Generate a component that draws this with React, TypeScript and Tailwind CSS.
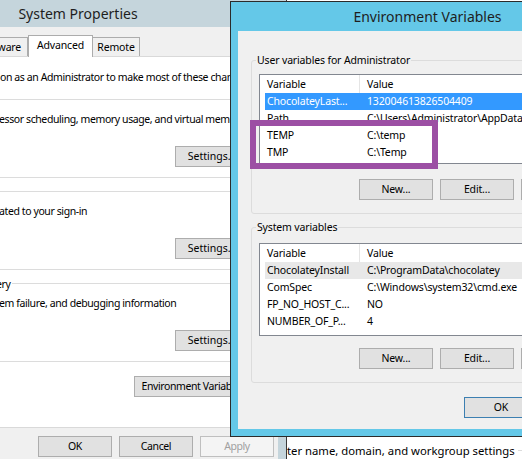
import type { ReactNode } from 'react'

type Row = { name: string; value: string }

const userVars: Row[] = [
  { name: 'ChocolateyLast...', value: '132004613826504409' },
  { name: 'Path', value: 'C:\\Users\\Administrator\\AppData\\Local\\Microsoft\\WindowsApps' },
  { name: 'TEMP', value: 'C:\\temp' },
  { name: 'TMP', value: 'C:\\Temp' },
]

const systemVars: Row[] = [
  { name: 'ChocolateyInstall', value: 'C:\\ProgramData\\chocolatey' },
  { name: 'ComSpec', value: 'C:\\Windows\\system32\\cmd.exe' },
  { name: 'FP_NO_HOST_C...', value: 'NO' },
  { name: 'NUMBER_OF_P...', value: '4' },
]

// text whose start is hidden off the left edge: the first part sits right-aligned in a clipped box
function Cut({ box, hidden, shown }: { box: string; hidden: string; shown: string }) {
  return (
    <div className="flex whitespace-nowrap">
      <span className={`flex shrink-0 justify-end overflow-hidden ${box}`}>
        <span className="shrink-0">{hidden}</span>
      </span>
      <span>{shown}</span>
    </div>
  )
}

function Btn({ children, className = '' }: { children: ReactNode; className?: string }) {
  return (
    <div className={`flex h-[21px] w-[74px] shrink-0 items-center justify-center border whitespace-nowrap ${className}`}>
      {children}
    </div>
  )
}

function ListView({ rows, className, selected }: { rows: Row[]; className: string; selected: 'active' | 'inactive' }) {
  return (
    <div className={`overflow-hidden border border-[#828790] bg-white ${className}`}>
      <div className="flex h-[18px]">
        <div className="flex w-[100px] shrink-0 items-center border-r border-[#e5e5e5] pl-[7px]">Variable</div>
        <div className="flex items-center pl-[7px]">Value</div>
      </div>
      {rows.map((r, i) => (
        <div
          key={r.name}
          className={`ml-[5px] flex h-[17px] items-center whitespace-nowrap ${
            i === 0 ? (selected === 'active' ? 'bg-[#3399ff] text-white' : 'bg-[#e8e8e8]') : ''
          }`}
        >
          <div className="w-[95px] shrink-0 pl-[2px]">{r.name}</div>
          <div className="pl-[7px]">{r.value}</div>
        </div>
      ))}
    </div>
  )
}

function SysGroup({ legend, hidden, shown }: { legend: ReactNode; hidden: string; shown: string }) {
  return (
    <div className="relative flex h-[79px] shrink-0 flex-col rounded-[3px] border border-[#dcdcdc] pt-[12px] pr-[6px] pb-[10px] pl-[9px]">
      <div className="absolute top-[-7px] left-[6px] bg-white pr-[2px] pl-[1px]">{legend}</div>
      <Cut box="w-[92px]" hidden={hidden} shown={shown} />
      <Btn className="mt-auto mr-[3px] w-[72px] self-end border-[#adadad] bg-[#e1e1e1] tracking-normal">Settings...</Btn>
    </div>
  )
}

export default function App() {
  return (
    <div className="relative h-[459px] w-[522px] overflow-hidden bg-white font-['Noto_Sans',sans-serif] text-[10.5px] leading-[15px] text-black">
      {/* window behind, computer name tab */}
      <div className="absolute top-[400px] left-[120px] h-[80px] w-[420px] bg-white pt-[43px] text-[11.3px]">
        <div className="flex items-center">
          <Cut box="w-[167px]" hidden="Compu" shown="ter name, domain, and workgroup settings" />
          <div className="ml-[3px] h-px flex-1 bg-[#dcdcdc]" />
        </div>
      </div>

      {/* System Properties */}
      <div className="absolute top-0 left-[-130px] flex h-[480px] w-[417px] flex-col border-r border-[#3a3a3a] bg-[#c5d5dc] tracking-[-0.4px]">
        <div className="flex h-[27px] shrink-0 items-center justify-center text-[14px] tracking-normal text-[#1e1e1e]">System Properties</div>
        <div className="mx-[8px] flex flex-1 flex-col bg-[#f0f0f0] px-[6px] pt-[8px]">
          <div className="flex h-[21px] items-end pl-[2px] tracking-[-0.15px]">
            <div className="flex h-[19px] w-[81px] items-center justify-center border-t border-l border-[#acacac] whitespace-nowrap">Computer Name</div>
            <div className="flex h-[19px] w-[61px] items-center justify-center border-x border-t border-[#acacac]">Hardware</div>
            <div className="relative z-10 mb-[-1px] flex h-[22px] w-[65px] items-center justify-center border-x border-t border-[#acacac] bg-white pb-[3px]">Advanced</div>
            <div className="flex h-[19px] w-[47px] items-center justify-center border-t border-r border-[#acacac]">Remote</div>
          </div>
          <div className="flex h-[372px] flex-col border border-[#d9d9d9] bg-white px-[12px] pt-[13px]">
            <Cut box="w-[103px]" hidden="You must be logged " shown="on as an Administrator to make most of these changes." />
            <div className="mt-[14px] flex flex-col gap-[13px]">
              <SysGroup legend="Performance" hidden="Visual effects, proc" shown="essor scheduling, memory usage, and virtual memory" />
              <SysGroup legend="User Profiles" hidden="Desktop settings rel" shown="ated to your sign-in" />
              <SysGroup
                legend={<Cut box="w-[91px]" hidden="Startup and Recov" shown="ery" />}
                hidden="System startup, syst"
                shown="em failure, and debugging information"
              />
            </div>
            <Btn className="mt-[14px] w-[125px] self-end border-[#adadad] bg-[#e1e1e1]">Environment Variables...</Btn>
          </div>
          <div className="-mr-[2px] mt-[8px] flex justify-end gap-[7px]">
            <Btn className="border-[#adadad] bg-[#e1e1e1]">OK</Btn>
            <Btn className="border-[#adadad] bg-[#e1e1e1]">Cancel</Btn>
            <Btn className="border-[#bfbfbf] bg-[#f4f4f4] text-[#a0a0a0]">Apply</Btn>
          </div>
        </div>
      </div>

      {/* Environment Variables */}
      <div className="absolute top-[1px] left-[230px] flex h-[436px] w-[395px] flex-col border border-[#2b2b2b] bg-[#64c8e8] px-[7px] pb-[7px] tracking-[-0.15px]">
        <div className="flex h-[29px] shrink-0 items-center justify-center text-[14px] tracking-normal text-[#1e1e1e]">Environment Variables</div>
        <div className="flex flex-1 flex-col bg-[#f0f0f0] px-[13px] pt-[29px]">
          <div className="relative h-[154px] rounded-[3px] border border-[#dcdcdc] pt-[13px] pl-[7px]">
            <div className="absolute top-[-8px] left-[4px] bg-[#f0f0f0] px-[1px]">User variables for Administrator</div>
            <ListView rows={userVars} className="h-[90px]" selected="active" />
            <div className="mt-[15px] ml-[100px] flex gap-[7px]">
              <Btn className="border-[#adadad] bg-[#e1e1e1]">New...</Btn>
              <Btn className="border-[#adadad] bg-[#e1e1e1]">Edit...</Btn>
              <Btn className="border-[#adadad] bg-[#e1e1e1]">Delete</Btn>
            </div>
          </div>
          <div className="relative mt-[13px] h-[156px] rounded-[3px] border border-[#dcdcdc] pt-[15px] pl-[7px]">
            <div className="absolute top-[-8px] left-[4px] bg-[#f0f0f0] px-[1px]">System variables</div>
            <ListView rows={systemVars} className="h-[93px]" selected="inactive" />
            <div className="mt-[12px] ml-[100px] flex gap-[7px]">
              <Btn className="border-[#adadad] bg-[#e1e1e1]">New...</Btn>
              <Btn className="border-[#adadad] bg-[#e1e1e1]">Edit...</Btn>
              <Btn className="border-[#adadad] bg-[#e1e1e1]">Delete</Btn>
            </div>
          </div>
          <div className="mt-[14px] ml-[213px] flex gap-[7px]">
            <Btn className="border-[#3c7fb1] bg-[#e1e1e1]">OK</Btn>
            <Btn className="border-[#adadad] bg-[#e1e1e1]">Cancel</Btn>
          </div>
        </div>
      </div>

      {/* highlight around TEMP / TMP */}
      <div className="absolute top-[120px] left-[250px] h-[49px] w-[188px] border-[6px] border-[#9c4fa4]" />
    </div>
  )
}
